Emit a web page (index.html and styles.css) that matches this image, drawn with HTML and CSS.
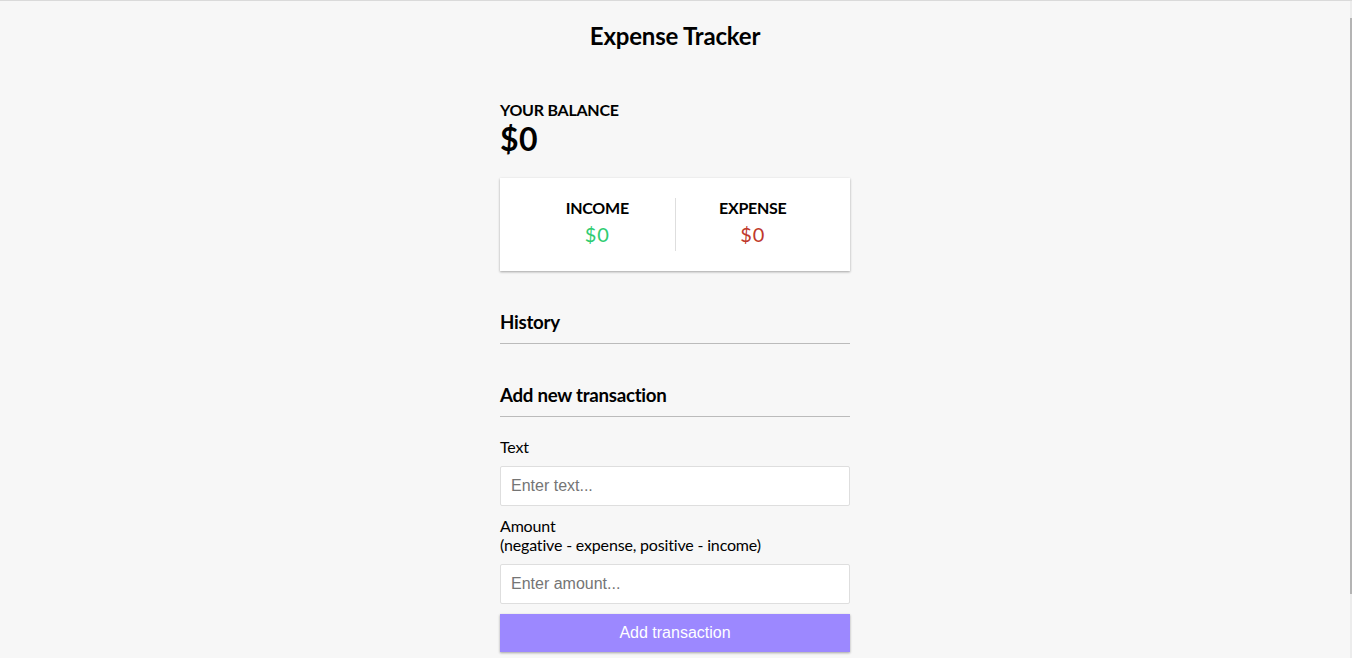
FILE: index.html
```html
<!DOCTYPE html>
<html lang="en">
<head>
<meta charset="UTF-8">
<title>Expense Tracker</title>
<link rel="stylesheet" href="styles.css">
</head>
<body>
  <h2 class="title">Expense Tracker</h2>
  <div class="container">
    <h4>Your Balance</h4>
    <h1 class="balance">$0</h1>

    <div class="inc-exp-container">
      <div class="inc-exp-col divider">
        <h4>Income</h4>
        <p class="money plus">$0</p>
      </div>
      <div class="inc-exp-col">
        <h4>Expense</h4>
        <p class="money minus">$0</p>
      </div>
    </div>

    <h3>History</h3>
    <ul class="list"></ul>

    <h3>Add new transaction</h3>
    <form class="form">
      <div class="form-control">
        <label for="text">Text</label>
        <input type="text" id="text" placeholder="Enter text...">
      </div>
      <div class="form-control">
        <label for="amount">Amount <br>(negative - expense, positive - income)</label>
        <input type="number" id="amount" placeholder="Enter amount...">
      </div>
      <button type="button" class="btn">Add transaction</button>
    </form>
  </div>
  <div class="fake-scroll"><div class="fake-thumb"></div></div>
</body>
</html>
```

FILE: styles.css
```css
* {
  box-sizing: border-box;
}

html {
  scrollbar-width: none;
}

html::-webkit-scrollbar {
  display: none;
}

body {
  background-color: #f7f7f7;
  display: flex;
  flex-direction: column;
  align-items: center;
  min-height: 100vh;
  margin: 0;
  padding-right: 2px;
  border-top: 1px solid #dadada;
  font-family: "Lato", "Open Sans", sans-serif;
  letter-spacing: -0.17px;
  color: #000;
}

.title {
  font-size: 24px;
  letter-spacing: -0.2px;
  margin: 19.92px 0;
}

.container {
  margin: 30px auto;
  width: 350px;
}

.balance {
  font-size: 32px;
  letter-spacing: 0.5px;
  margin: 0;
}

h3 {
  font-size: 18.72px;
  letter-spacing: -0.27px;
  border-bottom: 1px solid #bbb;
  padding-bottom: 10px;
  margin: 40px 0 10px;
}

h4 {
  font-size: 16px;
  letter-spacing: -0.25px;
  margin: 0;
  text-transform: uppercase;
}

.inc-exp-container {
  background-color: #fff;
  box-shadow: 0 1px 3px rgba(0, 0, 0, 0.12), 0 1px 2px rgba(0, 0, 0, 0.24);
  padding: 20px;
  display: flex;
  justify-content: space-between;
  margin: 20px 0;
}

.inc-exp-col {
  flex: 1;
  text-align: center;
}

.divider {
  border-right: 1px solid #dedede;
}

.money {
  font-size: 20px;
  letter-spacing: 0.8px;
  margin: 5px 0;
}

.plus {
  color: #2ecc71;
}

.minus {
  color: #c0392b;
}

.list {
  list-style-type: none;
  padding: 0;
  margin: 16px 0 40px;
}

.form {
  margin: 0;
}

label {
  display: inline-block;
  margin: 10px 0;
  font-size: 16px;
}

input {
  border: 1px solid #dedede;
  border-radius: 2px;
  display: block;
  font-family: "Liberation Sans", Arial, sans-serif;
  font-size: 16px;
  letter-spacing: 0;
  padding: 10px;
  width: 100%;
  background: #fff;
  color: #000;
  margin: 0;
}

input::placeholder {
  color: #757575;
}

.btn {
  cursor: pointer;
  background-color: #9c88ff;
  box-shadow: 0 1px 3px rgba(0, 0, 0, 0.12), 0 1px 2px rgba(0, 0, 0, 0.24);
  color: #fff;
  border: 0;
  display: block;
  font-family: "Liberation Sans", Arial, sans-serif;
  font-size: 16px;
  letter-spacing: 0;
  margin: 10px 0 30px;
  padding: 10px;
  width: 100%;
}

.fake-scroll {
  position: fixed;
  top: 1px;
  right: 0;
  width: 2px;
  height: 657px;
  background: #ececec;
}

.fake-thumb {
  margin-top: 17px;
  height: 576px;
  background: #b4b4b4;
}
```
